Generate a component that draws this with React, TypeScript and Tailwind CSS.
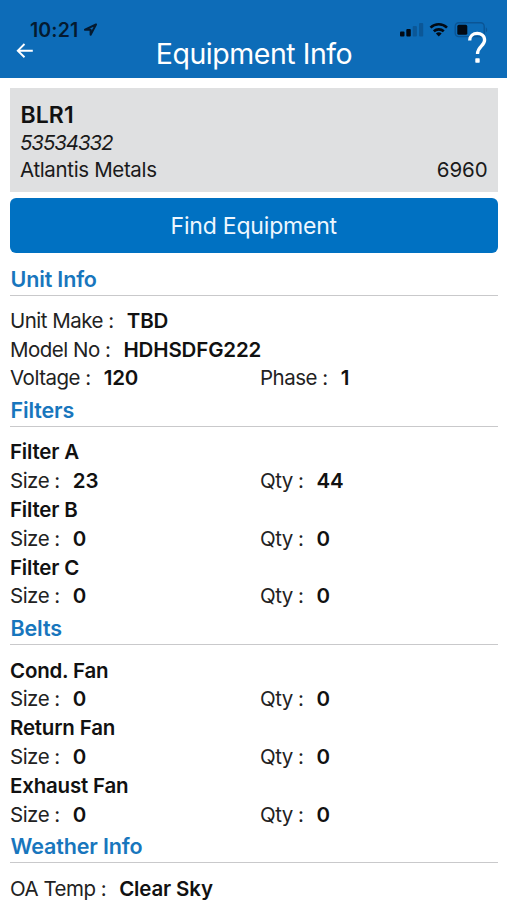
import type { ReactNode } from "react";

function Heading({ children }: { children: ReactNode }) {
  return (
    <div className="h-[45.3px]">
      <h2 className="h-[34px] border-b-[1.5px] border-[#c9c9cb] pl-[0.5px] text-[21.5px] font-semibold leading-[34px] tracking-[-0.15px] text-[#1876bd]">
        {children}
      </h2>
    </div>
  );
}

function Field({ label, value }: { label: string; value: string }) {
  return (
    <div className="flex">
      <span className="tracking-[-0.5px]">{label} :</span>
      <span className="ml-[13px] font-semibold tracking-[-0.15px] text-[#111]">{value}</span>
    </div>
  );
}

function Row({ children }: { children: ReactNode }) {
  return <div className="grid h-[28.8px] grid-cols-[250px_1fr] whitespace-nowrap leading-[28.8px]">{children}</div>;
}

function Part({ name, size, qty }: { name: string; size: string; qty: string }) {
  return (
    <>
      <h3 className="h-[28.8px] font-semibold leading-[28.8px] tracking-[-0.2px] text-[#111]">{name}</h3>
      <Row>
        <Field label="Size" value={size} />
        <Field label="Qty" value={qty} />
      </Row>
    </>
  );
}

export default function App() {
  return (
    <div className="h-[900px] w-[507px] overflow-hidden bg-white font-['Inter',sans-serif] text-[20.5px] text-[#222]">
      <header className="relative h-[78px] bg-[#0d6cb8] text-white">
        <span className="absolute left-[30px] top-[18px] text-[19.5px] font-semibold leading-6 tracking-[0.1px] text-[#041a30]">10:21</span>
        <svg className="absolute left-[83px] top-[22px]" width="16" height="16" viewBox="0 0 16 16" fill="none" stroke="#041a30" strokeWidth="2" strokeLinejoin="round">
          <path d="M13 2.5 2 7.7H7.6V12.8Z" />
        </svg>
        <svg className="absolute left-[16px] top-[42px]" width="18" height="17" viewBox="0 0 18 17" fill="none" stroke="white" strokeWidth="1.9">
          <path d="M16.8 8.7H2M8.5 2 1.8 8.7l6.7 6.5" />
        </svg>
        <h1 className="absolute left-0 top-[36px] w-full pl-[1px] text-center text-[28.5px] font-normal leading-9 tracking-[-0.45px]">Equipment Info</h1>
        <svg className="absolute left-[398px] top-[20px]" width="92" height="20" viewBox="0 0 92 20" fill="none">
          <rect x="2" y="11.5" width="4.5" height="5" rx="1" fill="#020a14" />
          <rect x="8.3" y="9" width="4.5" height="7.5" rx="1" fill="#020a14" />
          <rect x="14.7" y="6" width="4.2" height="10.5" rx="1" fill="#0b5797" />
          <rect x="21" y="3" width="4.2" height="13.5" rx="1" fill="#0b5797" />
          <path d="M32.5 7.6a12 12 0 0 1 16.5 0M35.8 11.3a7.5 7.5 0 0 1 10 0" stroke="#020a14" strokeWidth="2.6" />
          <path d="m40.8 16.5-2.9-3a4.3 4.3 0 0 1 5.8 0Z" fill="#020a14" />
          <rect x="57.2" y="2.8" width="29" height="13.8" rx="3.6" stroke="#0b5595" strokeWidth="1.4" />
          <rect x="59.3" y="4.8" width="10" height="10" rx="1.6" fill="#020a14" />
          <path d="M87.8 7.5v4.8c1.8-.5 1.8-4.3 0-4.8Z" fill="#0b5595" />
        </svg>
        <svg className="absolute left-[466px] top-[30px]" width="24" height="36" viewBox="0 0 24 36" fill="none">
          <path d="M3.7 10.5C3.7 1.2 18.6 1.2 18.6 10c0 6-7.1 6.6-7.1 14" stroke="white" strokeWidth="3.3" />
          <rect x="9.3" y="28.3" width="4.4" height="4.4" rx=".6" fill="white" />
        </svg>
      </header>

      <main className="px-[10px] pt-[10px]">
        <section className="-mr-[0.5px] h-[103.5px] bg-[#dfe0e1] px-[10px] pt-[12px] text-[#1a1a1a]">
          <h2 className="h-[30px] pl-[0.5px] text-[23px] font-semibold leading-[30px] tracking-[0.1px] text-[#111]">BLR1</h2>
          <p className="h-[26px] italic leading-[26px] tracking-[-1.1px]">53534332</p>
          <p className="flex justify-between leading-[27px] tracking-[-0.35px]">
            <span>Atlantis Metals</span>
            <span className="tracking-[-0.1px]">6960</span>
          </p>
        </section>
        <button className="-mr-[0.5px] mt-[6.5px] block h-[54.5px] w-[487.5px] rounded-[6px] bg-[#0071c2] pt-[1px] text-[23px] leading-[54px] tracking-[-0.2px] text-[#eef7ff]">
          Find Equipment
        </button>

        <div className="-mr-[0.5px] pt-[9px]">
          <Heading>Unit Info</Heading>
          <Row><Field label="Unit Make" value="TBD" /></Row>
          <Row><Field label="Model No" value="HDHSDFG222" /></Row>
          <Row>
            <Field label="Voltage" value="120" />
            <Field label="Phase" value="1" />
          </Row>
          <Heading>Filters</Heading>
          <Part name="Filter A" size="23" qty="44" />
          <Part name="Filter B" size="0" qty="0" />
          <Part name="Filter C" size="0" qty="0" />
          <Heading>Belts</Heading>
          <Part name="Cond. Fan" size="0" qty="0" />
          <Part name="Return Fan" size="0" qty="0" />
          <Part name="Exhaust Fan" size="0" qty="0" />
          <Heading>Weather Info</Heading>
          <Row><Field label="OA Temp" value="Clear Sky" /></Row>
        </div>
      </main>
    </div>
  );
}
